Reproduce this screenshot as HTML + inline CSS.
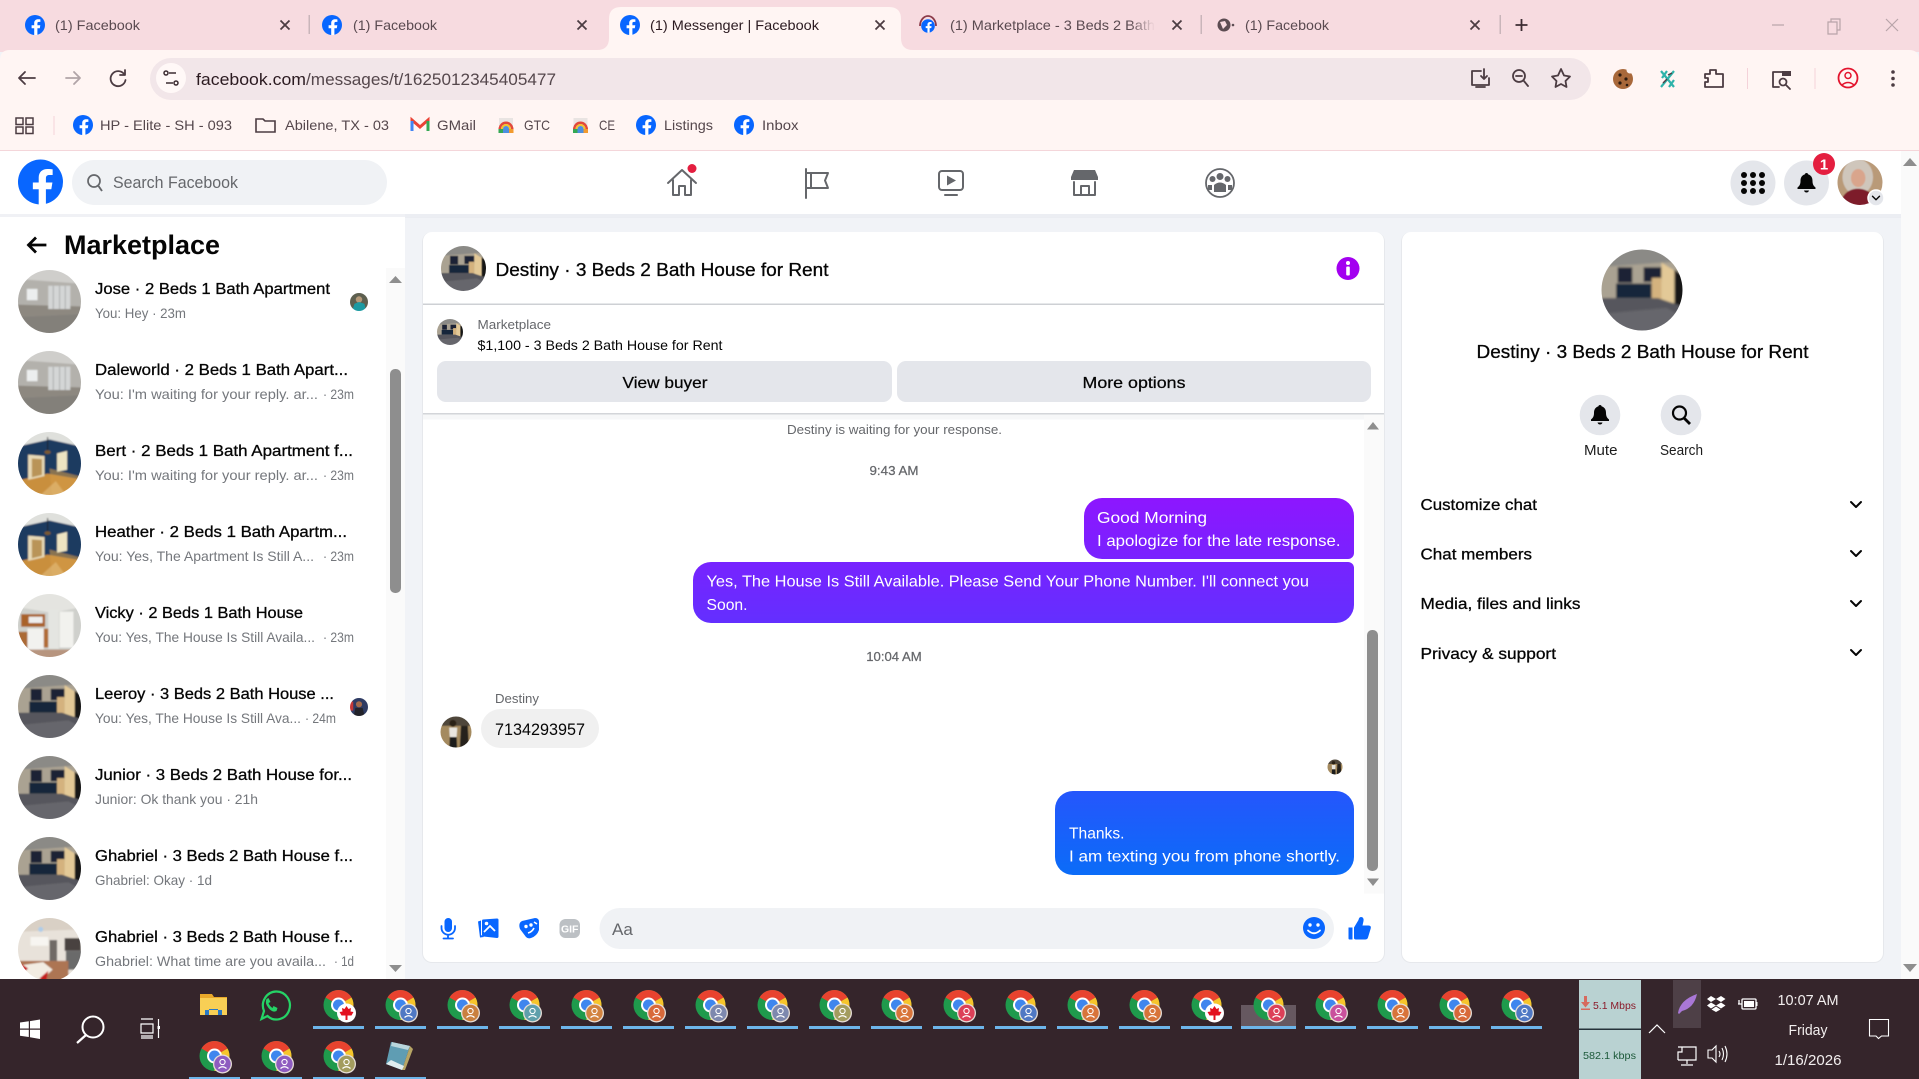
<!DOCTYPE html>
<html lang="en"><head><meta charset="utf-8"><title>(1) Messenger | Facebook</title>
<style>
html,body{margin:0;padding:0;width:1919px;height:1079px;overflow:hidden;background:#f1f3f7}
svg{display:block}
text{font-family:"Liberation Sans",sans-serif;white-space:pre}
.t{font-size:14px;fill:#5a4a50}
.b{font-size:14px;fill:#55474c}
.n{font-size:16px;fill:#050505;stroke:#050505;stroke-width:.3}
.s{font-size:14px;fill:#74777c}
.m{font-size:16px;fill:#fff}
.g{font-size:13px;fill:#65676b}
.ln{fill:none;stroke:#65676b;stroke-width:2;stroke-linejoin:round;stroke-linecap:round}
.tb{fill:none;stroke:#4c3c42;stroke-width:1.8;stroke-linecap:round;stroke-linejoin:round}
.w{fill:none;stroke:#fff;stroke-width:1.4}
.tk{font-size:15px;fill:#f2eeee}
</style></head><body>
<svg width="1919" height="1079" viewBox="0 0 1919 1079" xmlns="http://www.w3.org/2000/svg">
<defs>
<clipPath id="cc"><circle cx="50" cy="50" r="50"/></clipPath>
<filter id="bl" x="-5%" y="-5%" width="110%" height="110%"><feGaussianBlur stdDeviation="1.300"/></filter>
<linearGradient id="pg" gradientUnits="userSpaceOnUse" x1="0" y1="498" x2="0" y2="623"><stop offset="0" stop-color="#8d16ff"/><stop offset="1" stop-color="#632fff"/></linearGradient>
<linearGradient id="bg" gradientUnits="userSpaceOnUse" x1="0" y1="791" x2="0" y2="875"><stop offset="0" stop-color="#2556fc"/><stop offset="1" stop-color="#0b6cf8"/></linearGradient>
<linearGradient id="fade" x1="0" x2="1" y1="0" y2="0"><stop offset="0" stop-color="#f7dbe0" stop-opacity="0"/><stop offset="1" stop-color="#f7dbe0"/></linearGradient>
<g id="fb"><circle r="10" fill="#0866ff"/><path fill="#fff" d="M2.4 10V3.2H4.8L5.3.2H2.4V-1.6C2.4-2.5 2.8-3.1 4-3.1H5.4V-5.6C5-5.7 4.1-5.8 3.1-5.8 .9-5.8-.8-4.5-.8-2V.2H-3.4V3.2H-.8V10Z"/></g>
<g id="x"><path d="M-4.5-4.5L4.5 4.5M4.5-4.5L-4.5 4.5" stroke="#4c3c42" stroke-width="1.8" fill="none"/></g>
<g id="bell"><path d="M0-10C-1-10-1.5-9.4-1.5-8.7-5-7.5-6-5-6-2-6 1-7 3-9 4.5V6H9V4.5C7 3 6 1 6-2 6-5 5-7.5 1.5-8.7 1.5-9.4 1-10 0-10ZM-2.5 7.5H2.5C2 9 1 9.5 0 9.5-1 9.5-2 9-2.5 7.5Z" fill="#050505"/></g>
<g id="chv"><path d="M-5-2.5L0 2.5 5-2.5" fill="none" stroke="#050505" stroke-width="2" stroke-linecap="round" stroke-linejoin="round"/></g>
<g id="rb"><rect x="-7" y="-8" width="14" height="9" fill="#e9e4e2"/><path d="M-7.5 3A7.5 7.5 0 0 1 7.5 3H5A5 5 0 0 0-5 3Z" fill="#e2483b"/><path d="M-5 3A5 5 0 0 1 5 3H3A3 3 0 0 0-3 3Z" fill="#f3c22e"/><path d="M-3 3A3 3 0 0 1 3 3V7H-3Z" fill="#4c8fe0"/><path d="M-7.500 3H-3V7H-7.500Z" fill="#34a853"/><path d="M3 3H7.500V7H3Z" fill="#f29a2e"/></g>

<g id="r1" clip-path="url(#cc)"><g filter="url(#bl)"><rect x="-5" y="-5" width="110" height="110" fill="#b3b1ac"/><path d="M-5-5H105V22L-5 14Z" fill="#cfcecb"/><path d="M-5 55L105 58V105H-5Z" fill="#8d8880"/><rect x="14" y="30" width="17" height="18" fill="#eceeee"/><rect x="48" y="25" width="35" height="37" fill="#d4d6d6"/><path d="M56 25V62M66 25V62M75 25V62" stroke="#a8aaaa" stroke-width="1.5"/><path d="M-5 75L105 70V105H-5Z" fill="#83807a"/></g></g>
<g id="r2" clip-path="url(#cc)"><g filter="url(#bl)"><rect x="-5" y="-5" width="110" height="110" fill="#1b3a60"/><path d="M-5-5H105V24L50 12-5 24Z" fill="#dfe0dc"/><path d="M-5 78L47 66 105 76V105H-5Z" fill="#c98f3e"/><path d="M50 58L105 72V105H55Z" fill="#d39a48" opacity=".6"/><path d="M16 36L42 38V70L16 76Z" fill="#e7d9b6"/><path d="M22 42L38 43V68L22 72Z" fill="#b99458"/><path d="M62 34L78 30V60L62 63Z" fill="#eee4c2"/><path d="M47 8V30" stroke="#222" stroke-width="1.5"/><ellipse cx="47" cy="32" rx="5" ry="3" fill="#7a5a30"/><path d="M30 105L60 78 80 105Z" fill="#e7c687" opacity=".5"/></g></g>
<g id="r3" clip-path="url(#cc)"><g filter="url(#bl)"><rect x="-5" y="-5" width="110" height="110" fill="#cfd0cc"/><path d="M-5-5H105V20L55 30-5 20Z" fill="#e4e4e0"/><rect x="5" y="32" width="38" height="20" fill="#a9622c"/><rect x="17" y="36" width="22" height="10" fill="#eee"/><rect x="15" y="55" width="26" height="33" fill="#f2f2ef"/><rect x="-5" y="60" width="20" height="28" fill="#ab6a36"/><rect x="41" y="55" width="16" height="30" fill="#b06c36"/><rect x="48" y="25" width="17" height="62" fill="#e4e5e1"/><rect x="66" y="28" width="22" height="57" fill="#f2f2ee"/><path d="M-5 88H105V105H-5Z" fill="#b7957f"/></g></g>
<g id="r4" clip-path="url(#cc)"><g filter="url(#bl)"><rect x="-5" y="-5" width="110" height="110" fill="#aaa292"/><path d="M-5-5H105V14L-5 22Z" fill="#8b8a86"/><rect x="20" y="22" width="18" height="19" fill="#1b2434"/><rect x="52" y="22" width="22" height="18" fill="#1b2434"/><rect x="18" y="42" width="44" height="18" fill="#18253a"/><rect x="62" y="35" width="12" height="28" fill="#d4b27e"/><path d="M74 16L93 28V67L74 63Z" fill="#e3c997"/><path d="M90 25L105 35V72L90 67Z" fill="#151412"/><path d="M-5 60L70 60 105 72V105H-5Z" fill="#57575d"/><path d="M-5 80L80 72 105 85V105H-5Z" fill="#66666c"/></g></g>
<g id="r5" clip-path="url(#cc)"><g filter="url(#bl)"><rect x="-5" y="-5" width="110" height="110" fill="#e8e2da"/><path d="M-5-5H105V18L-5 22Z" fill="#d9d0c5"/><circle cx="36" cy="18" r="4" fill="#aecce8"/><rect x="20" y="30" width="28" height="14" fill="#f7f5f1"/><rect x="50" y="35" width="12" height="36" fill="#6f6a66"/><rect x="74" y="32" width="26" height="20" fill="#4a4340"/><rect x="76" y="52" width="26" height="30" fill="#6a6a6a"/><path d="M-5 68H80V105H-5Z" fill="#ad7453"/><path d="M5 75L40 70 55 82 30 105H20L8 88Z" fill="#f2ece2"/><path d="M4 72L16 80 8 88ZM34 96L48 84 44 105Z" fill="#c41f1f"/></g></g>
<g id="pw" clip-path="url(#cc)"><g filter="url(#bl)"><rect x="-5" y="-5" width="110" height="110" fill="#b99a78"/><ellipse cx="45" cy="38" rx="34" ry="40" fill="#cfc6bb"/><ellipse cx="46" cy="40" rx="16" ry="20" fill="#d9a58c"/><path d="M5 105C8 72 30 64 45 64 62 64 84 72 86 105Z" fill="#7d1d2a"/></g></g>
<g id="pd" clip-path="url(#cc)"><g filter="url(#bl)"><rect x="-5" y="-5" width="110" height="110" fill="#a48a5e"/><rect x="-5" y="-5" width="110" height="35" fill="#50463a"/><circle cx="40" cy="22" r="11" fill="#2a2018"/><path d="M28 36H54L52 66H30Z" fill="#e9e6e0"/><path d="M30 66H52L54 105H28Z" fill="#1a1a1c"/><path d="M66 30H88L92 105H62Z" fill="#25221f"/></g></g>
<g id="pt" clip-path="url(#cc)"><g filter="url(#bl)"><rect x="-5" y="-5" width="110" height="110" fill="#5d5e4f"/><circle cx="50" cy="36" r="18" fill="#b49a7a"/><path d="M10 105L25 60 50 50 80 60 90 105Z" fill="#1b9aa2"/></g></g>
<g id="pl" clip-path="url(#cc)"><g filter="url(#bl)"><rect x="-5" y="-5" width="110" height="110" fill="#2e3b63"/><circle cx="50" cy="35" r="17" fill="#a36b4b"/><path d="M20 105L30 55H70L82 105Z" fill="#23242c"/><rect x="-5" y="20" width="23" height="50" fill="#c43838"/></g></g>

<g id="ch"><circle r="15" fill="#1f9a4c"/><path d="M0 0L-13-7.5A15 15 0 0 1 13-7.5Z" fill="#e8432f"/><path d="M0 0L13-7.5A15 15 0 0 1 0 15Z" fill="#f7c52b"/><circle r="7.5" fill="#fff"/><circle r="5.5" fill="#3f86ee"/><circle cx="8" cy="8" r="9.5" fill="#e6ddd6"/><circle cx="8" cy="8" r="8.2"/><circle cx="8" cy="6" r="2.6" fill="none" stroke="#fff" stroke-width="1.1"/><path d="M4 12.5Q8 9 12 12.5" fill="none" stroke="#fff" stroke-width="1.2"/></g>
<g id="chr"><circle r="15" fill="#1f9a4c"/><path d="M0 0L-13-7.5A15 15 0 0 1 13-7.5Z" fill="#e8432f"/><path d="M0 0L13-7.5A15 15 0 0 1 0 15Z" fill="#f7c52b"/><circle r="7.5" fill="#fff"/><circle r="5.5" fill="#3f86ee"/><circle cx="8" cy="8" r="9.5" fill="#fff"/><path d="M8 1L10 4 12.5 3 12 6.5 15 7 13 10.5H9V15H7V10.5H3L1 7 4 6.5 3.5 3 6 4Z" fill="#e3101e"/></g>
</defs>

<!-- page background -->
<rect width="1919" height="1079" fill="#f1f3f7"/>

<!-- tab strip -->
<rect width="1919" height="52" fill="#f7dbe0"/>
<path d="M0 60Q0 50 10 50H1909Q1919 50 1919 60V151H0Z" fill="#fff5f3"/>
<path d="M597 50Q609 50 609 38V19Q609 7 621 7H889Q901 7 901 19V38Q901 50 913 50Z" fill="#fff5f3"/>

<use href="#fb" x="35" y="25"/>
<text class="t" x="55" y="30" textLength="85" lengthAdjust="spacingAndGlyphs">(1) Facebook</text>
<use href="#x" x="285" y="25"/>
<rect x="308.500" y="15" width="1.500" height="19" fill="#c9b5ba"/>
<use href="#fb" x="332" y="25"/>
<text class="t" x="353" y="30" textLength="84" lengthAdjust="spacingAndGlyphs">(1) Facebook</text>
<use href="#x" x="582" y="25"/>
<use href="#fb" x="630" y="25"/>
<text class="t" x="650" y="30" textLength="169" lengthAdjust="spacingAndGlyphs" style="fill:#2b1a20">(1) Messenger | Facebook</text>
<use href="#x" x="880" y="25"/>
<g transform="translate(928 26) scale(.68)"><use href="#fb"/></g>
<path d="M920 26A8 10 0 0 1 936 26" fill="none" stroke="#8b3a4a" stroke-width="1.800"/>
<text class="t" x="950" y="30" textLength="205" lengthAdjust="spacingAndGlyphs">(1) Marketplace - 3 Beds 2 Bath</text>
<rect x="1130" y="14" width="25" height="22" fill="url(#fade)"/>
<use href="#x" x="1177" y="25"/>
<rect x="1200.500" y="15" width="1.500" height="19" fill="#c9b5ba"/>
<circle cx="1224" cy="25" r="6.500" fill="#5c4c52"/><path d="M1220 22L1225 21 1227 25 1223 29Z" fill="#f7dbe0"/><circle cx="1233" cy="25" r="1.300" fill="#5c4c52"/>
<text class="t" x="1245" y="30" textLength="84" lengthAdjust="spacingAndGlyphs">(1) Facebook</text>
<use href="#x" x="1475" y="25"/>
<rect x="1499.500" y="15" width="1.500" height="19" fill="#c9b5ba"/>
<path d="M1521.500 19V31M1515.500 25H1527.500" stroke="#3c2c32" stroke-width="1.800"/>
<path d="M1772 25H1784" stroke="#b8a4a9" stroke-width="1.200"/>
<path d="M1828 22H1837V34H1828ZM1831 22V19H1840V30H1837" fill="none" stroke="#b8a4a9" stroke-width="1.200"/>
<path d="M1886 19L1898 31M1898 19L1886 31" stroke="#b8a4a9" stroke-width="1.200"/>

<!-- toolbar -->
<path d="M35 78H19M25 72L19 78 25 84" class="tb"/>
<path d="M66 78H80M74 72L80 78 74 84" fill="none" stroke="#b1a4a7" stroke-width="1.800" stroke-linecap="round" stroke-linejoin="round"/>
<path d="M124 74A7.500 7.500 0 1 0 125.500 80M125 70V75H120" class="tb"/>
<rect x="150" y="58" width="1441" height="42" rx="21" fill="#f2e6e9"/>
<circle cx="171" cy="78" r="15" fill="#fff8f7"/>
<path d="M169 73H176M166 83H173" stroke="#3c2c32" stroke-width="1.600"/><circle cx="166" cy="73" r="2" fill="none" stroke="#3c2c32" stroke-width="1.500"/><circle cx="176" cy="83" r="2" fill="none" stroke="#3c2c32" stroke-width="1.500"/>
<text x="196" y="85" font-size="17" fill="#2b1a20" textLength="110" lengthAdjust="spacingAndGlyphs">facebook.com</text>
<text x="306" y="85" font-size="17" fill="#55474c" textLength="250" lengthAdjust="spacingAndGlyphs">/messages/t/1625012345405477</text>
<path d="M1481 71H1472V85H1489V78M1484 69V79M1481 76L1484 79 1487 76M1476 87H1485" class="tb"/>
<circle cx="1519" cy="76" r="6" class="tb"/><path d="M1523.500 80.500L1528 86M1516 76H1522" class="tb"/>
<path d="M1561 69L1564 75.500 1570 76.500 1565.500 81 1566.500 87 1561 84 1555.500 87 1556.500 81 1552 76.500 1558 75.500Z" class="tb" stroke-width="1.500"/>
<circle cx="1623" cy="79" r="10" fill="#a8683a"/><circle cx="1620" cy="75" r="1.600" fill="#2b1a10"/><circle cx="1626" cy="79" r="1.600" fill="#2b1a10"/><circle cx="1620" cy="83" r="1.600" fill="#2b1a10"/><circle cx="1627" cy="85" r="1.300" fill="#2b1a10"/><circle cx="1630" cy="70" r="3.500" fill="#fff5f3"/>
<g transform="translate(-1 0)"><path d="M1662 71L1675 87M1675 71L1662 87M1663 78L1668 71M1670 87L1675 80" stroke="#2fb3aa" stroke-width="2.200" fill="none"/><path d="M1664 83L1668 79M1669 75L1673 73" stroke="#4c3c42" stroke-width="1.400"/></g>
<path d="M1705 74H1710V70H1716V74H1723V87H1705V82H1708V78H1705Z" class="tb"/>
<rect x="1747" y="68" width="1" height="21" fill="#f4d2d9"/>
<g transform="translate(-1 0)"><path d="M1791 72H1774V87H1780" class="tb"/><rect x="1783" y="71" width="9" height="5" fill="#4c3c42"/><circle cx="1784" cy="82" r="3.500" class="tb"/><path d="M1787 85L1791 89" class="tb"/></g>
<rect x="1814.500" y="68" width="1" height="21" fill="#f4d2d9"/>
<circle cx="1848" cy="78" r="9.500" fill="none" stroke="#e3142d" stroke-width="1.800"/><circle cx="1848" cy="75.500" r="3" fill="none" stroke="#e3142d" stroke-width="1.500"/><path d="M1842 85Q1848 80 1854 85" fill="none" stroke="#e3142d" stroke-width="1.500"/>
<circle cx="1893" cy="72" r="1.800" fill="#4c3c42"/><circle cx="1893" cy="78.500" r="1.800" fill="#4c3c42"/><circle cx="1893" cy="85" r="1.800" fill="#4c3c42"/>

<!-- bookmarks -->
<path d="M16 118H23V124.500H16ZM26 118H33V124.500H26ZM16 127H23V133.500H16ZM26 127H33V133.500H26Z" fill="none" stroke="#4c3c42" stroke-width="1.500"/>
<rect x="53.500" y="116" width="1" height="19" fill="#f4d2d9"/>
<use href="#fb" x="83" y="125"/>
<text class="b" x="100" y="130" textLength="132" lengthAdjust="spacingAndGlyphs">HP - Elite - SH - 093</text>
<path d="M256 119H263L265 121H275V132H256Z" fill="none" stroke="#4c3c42" stroke-width="1.600"/>
<text class="b" x="285" y="130" textLength="104" lengthAdjust="spacingAndGlyphs">Abilene, TX - 03</text>
<path d="M412 131V120L420 127 428 120V131" fill="none" stroke="#ea4335" stroke-width="3"/><path d="M412 121V131" stroke="#4285f4" stroke-width="3"/><path d="M428 121V131" stroke="#34a853" stroke-width="3"/>
<text class="b" x="437" y="130" textLength="39" lengthAdjust="spacingAndGlyphs">GMail</text>
<use href="#rb" x="506" y="126"/>
<text class="b" x="524" y="130" textLength="26" lengthAdjust="spacingAndGlyphs">GTC</text>
<use href="#rb" x="580.500" y="126"/>
<text class="b" x="599" y="130" textLength="16" lengthAdjust="spacingAndGlyphs">CE</text>
<use href="#fb" x="646" y="125"/>
<text class="b" x="664" y="130" textLength="49" lengthAdjust="spacingAndGlyphs">Listings</text>
<use href="#fb" x="744" y="125"/>
<text class="b" x="762" y="130" textLength="36.500" lengthAdjust="spacingAndGlyphs">Inbox</text>

<!-- FB header -->
<rect y="150" width="1919" height="1" fill="#f4d6da"/>
<rect y="206" width="1901" height="12" fill="#e4e6ea" opacity=".45"/>
<rect y="151" width="1901" height="63" fill="#fff"/>
<g transform="translate(40.500 182) scale(2.25)"><use href="#fb"/></g>
<rect x="72" y="160" width="315" height="45" rx="22.500" fill="#f0f2f5"/>
<circle cx="94" cy="181" r="6" fill="none" stroke="#65676b" stroke-width="1.700"/><path d="M98.500 186L102 191" stroke="#65676b" stroke-width="1.900"/>
<text x="113" y="188" font-size="17" fill="#65676b" textLength="125" lengthAdjust="spacingAndGlyphs">Search Facebook</text>
<path class="ln" d="M668 183L682 170 696 183M673 180V195H679V186H685V195H691V180"/>
<circle cx="692" cy="168.500" r="4.500" fill="#e41e3f"/>
<path class="ln" d="M806 169V198M806 173H828L825 180.500 828 188H806M811 173V188" stroke-width="1.700"/>
<rect x="939" y="171" width="24" height="19" rx="3" class="ln"/><path d="M947 175.500L956 180.500 947 185.500Z" fill="#65676b"/><path class="ln" d="M945 195H957"/>
<path d="M1071 177L1074 170H1095L1098 177V180H1071Z" fill="#65676b"/><path class="ln" d="M1074 182V195H1095V182M1081 195V186H1089V195"/>
<circle cx="1220" cy="183" r="14" fill="none" stroke="#65676b" stroke-width="1.800"/><circle cx="1220" cy="176.500" r="3.500" fill="#65676b"/><circle cx="1212.500" cy="179" r="3" fill="#65676b"/><circle cx="1227.500" cy="179" r="3" fill="#65676b"/><path d="M1214 192V185Q1220 180 1226 185V192Z" fill="#65676b"/><path d="M1208 190V185H1212V190ZM1228 190V185H1232V190Z" fill="#65676b"/>

<circle cx="1753" cy="183" r="22.500" fill="#e4e6eb"/>
<g fill="#050505"><circle cx="1744" cy="175" r="3"/><circle cx="1753" cy="175" r="3"/><circle cx="1762" cy="175" r="3"/><circle cx="1744" cy="183" r="3"/><circle cx="1753" cy="183" r="3"/><circle cx="1762" cy="183" r="3"/><circle cx="1744" cy="191" r="3"/><circle cx="1753" cy="191" r="3"/><circle cx="1762" cy="191" r="3"/></g>
<circle cx="1806.500" cy="183" r="22.500" fill="#e4e6eb"/><use href="#bell" x="1806.500" y="183"/>
<circle cx="1824" cy="164" r="11" fill="#e41e3f"/><text x="1824" y="169.500" font-size="15" font-weight="bold" fill="#fff" text-anchor="middle">1</text>
<use href="#pw" transform="translate(1837.500 160) scale(.45)"/>
<circle cx="1876" cy="198" r="8" fill="#e4e6eb" stroke="#fff" stroke-width="1.500"/><g transform="translate(1876 198) scale(.7)"><use href="#chv"/></g>

<!-- page scrollbar -->
<rect x="1901" y="151" width="18" height="828" fill="#fafafa"/>
<path d="M1910 158L1917 166H1903Z" fill="#8e8e8e"/>
<path d="M1910 972L1917 964H1903Z" fill="#8e8e8e"/>

<!-- left sidebar -->
<rect y="214" width="405" height="765" fill="#fff"/>
<rect y="214" width="1901" height="3" fill="#eceef2" opacity=".8"/>
<path d="M45 245H29M35 238.500L28.500 245 35 251.500" fill="none" stroke="#050505" stroke-width="2.800" stroke-linecap="square"/>
<text x="64" y="254" font-size="27" font-weight="bold" fill="#050505" textLength="156" lengthAdjust="spacingAndGlyphs">Marketplace</text>
<rect x="386" y="268" width="19" height="711" fill="#fafafa"/>
<path d="M395.500 276L402 283H389Z" fill="#8e8e8e"/>
<rect x="390" y="369" width="11" height="224" rx="5" fill="#8e8e8e"/>
<path d="M395.500 972L402 965H389Z" fill="#8e8e8e"/>

<use href="#r1" transform="translate(18 270) scale(.63)"/>
<text class="n" x="95" y="294" textLength="235" lengthAdjust="spacingAndGlyphs">Jose · 2 Beds 1 Bath Apartment</text>
<text class="s" x="95" y="318" textLength="91" lengthAdjust="spacingAndGlyphs">You: Hey · 23m</text>
<use href="#pt" transform="translate(350 293) scale(.18)"/>

<use href="#r1" transform="translate(18 351) scale(.63)"/>
<text class="n" x="95" y="375" textLength="253" lengthAdjust="spacingAndGlyphs">Daleworld · 2 Beds 1 Bath Apart...</text>
<text class="s" x="95" y="399" textLength="223" lengthAdjust="spacingAndGlyphs">You: I'm waiting for your reply. ar...</text>
<text class="s" x="323" y="399" textLength="31" lengthAdjust="spacingAndGlyphs">· 23m</text>

<use href="#r2" transform="translate(18 432) scale(.63)"/>
<text class="n" x="95" y="456" textLength="258" lengthAdjust="spacingAndGlyphs">Bert · 2 Beds 1 Bath Apartment f...</text>
<text class="s" x="95" y="480" textLength="223" lengthAdjust="spacingAndGlyphs">You: I'm waiting for your reply. ar...</text>
<text class="s" x="323" y="480" textLength="31" lengthAdjust="spacingAndGlyphs">· 23m</text>

<use href="#r2" transform="translate(18 513) scale(.63)"/>
<text class="n" x="95" y="537" textLength="252" lengthAdjust="spacingAndGlyphs">Heather · 2 Beds 1 Bath Apartm...</text>
<text class="s" x="95" y="561" textLength="219" lengthAdjust="spacingAndGlyphs">You: Yes, The Apartment Is Still A...</text>
<text class="s" x="323" y="561" textLength="31" lengthAdjust="spacingAndGlyphs">· 23m</text>

<use href="#r3" transform="translate(18 594) scale(.63)"/>
<text class="n" x="95" y="618" textLength="208" lengthAdjust="spacingAndGlyphs">Vicky · 2 Beds 1 Bath House</text>
<text class="s" x="95" y="642" textLength="220" lengthAdjust="spacingAndGlyphs">You: Yes, The House Is Still Availa...</text>
<text class="s" x="323" y="642" textLength="31" lengthAdjust="spacingAndGlyphs">· 23m</text>

<use href="#r4" transform="translate(18 675) scale(.63)"/>
<text class="n" x="95" y="699" textLength="239" lengthAdjust="spacingAndGlyphs">Leeroy · 3 Beds 2 Bath House ...</text>
<text class="s" x="95" y="723" textLength="206" lengthAdjust="spacingAndGlyphs">You: Yes, The House Is Still Ava...</text>
<text class="s" x="305" y="723" textLength="31" lengthAdjust="spacingAndGlyphs">· 24m</text>
<use href="#pl" transform="translate(350 698) scale(.18)"/>

<use href="#r4" transform="translate(18 756) scale(.63)"/>
<text class="n" x="95" y="780" textLength="257" lengthAdjust="spacingAndGlyphs">Junior · 3 Beds 2 Bath House for...</text>
<text class="s" x="95" y="804" textLength="163" lengthAdjust="spacingAndGlyphs">Junior: Ok thank you · 21h</text>

<use href="#r4" transform="translate(18 837) scale(.63)"/>
<text class="n" x="95" y="861" textLength="258" lengthAdjust="spacingAndGlyphs">Ghabriel · 3 Beds 2 Bath House f...</text>
<text class="s" x="95" y="885" textLength="117" lengthAdjust="spacingAndGlyphs">Ghabriel: Okay · 1d</text>

<use href="#r5" transform="translate(18 918) scale(.63)"/>
<text class="n" x="95" y="942" textLength="258" lengthAdjust="spacingAndGlyphs">Ghabriel · 3 Beds 2 Bath House f...</text>
<text class="s" x="95" y="966" textLength="231" lengthAdjust="spacingAndGlyphs">Ghabriel: What time are you availa...</text>
<text class="s" x="334" y="966" textLength="20" lengthAdjust="spacingAndGlyphs">· 1d</text>

<!-- chat panel -->
<rect x="422" y="232" width="963" height="731" rx="10" fill="#e6e8ec"/>
<rect x="423" y="232" width="961" height="730" rx="9" fill="#fff"/>
<use href="#r4" transform="translate(441 246) scale(.45)"/>
<text x="495.500" y="276" font-size="18" fill="#050505" stroke="#050505" stroke-width=".3" textLength="333" lengthAdjust="spacingAndGlyphs">Destiny · 3 Beds 2 Bath House for Rent</text>
<circle cx="1348" cy="268.500" r="11.500" fill="#a300f0"/><circle cx="1348" cy="263" r="2" fill="#fff"/><rect x="1346.200" y="266.500" width="3.600" height="9" rx="1" fill="#fff"/>
<rect x="423" y="303.500" width="961" height="1.500" fill="#ced0d4"/>
<use href="#r4" transform="translate(437 319) scale(.26)"/>
<text x="477.500" y="329" font-size="13" fill="#65676b" textLength="73.500" lengthAdjust="spacingAndGlyphs">Marketplace</text>
<text x="477.500" y="350" font-size="14" fill="#050505" textLength="245" lengthAdjust="spacingAndGlyphs">$1,100 - 3 Beds 2 Bath House for Rent</text>
<rect x="437" y="361" width="455" height="41" rx="9" fill="#e4e6eb"/>
<rect x="897" y="361" width="474" height="41" rx="9" fill="#e4e6eb"/>
<text x="665" y="388" font-size="16" fill="#050505" stroke="#050505" stroke-width=".25" text-anchor="middle" textLength="85" lengthAdjust="spacingAndGlyphs">View buyer</text>
<text x="1134" y="388" font-size="16" fill="#050505" stroke="#050505" stroke-width=".25" text-anchor="middle" textLength="103" lengthAdjust="spacingAndGlyphs">More options</text>
<rect x="423" y="413" width="961" height="1.500" fill="#d3d5d9"/>
<rect x="423" y="414.500" width="961" height="5" fill="#f6f7f8"/>
<rect x="1364" y="414.500" width="20" height="479" fill="#fafafa"/>
<path d="M1373 422L1379 429.500H1367Z" fill="#8e8e8e"/>
<rect x="1367" y="630" width="11" height="241" rx="5" fill="#8e8e8e"/>
<path d="M1373 886L1379 878.500H1367Z" fill="#8e8e8e"/>
<text x="894.500" y="434" font-size="13" fill="#65676b" text-anchor="middle" textLength="215" lengthAdjust="spacingAndGlyphs">Destiny is waiting for your response.</text>
<text x="894" y="475" font-size="13" fill="#65676b" stroke="#65676b" stroke-width=".25" text-anchor="middle" textLength="49" lengthAdjust="spacingAndGlyphs">9:43 AM</text>
<path d="M1102 498H1336A18 18 0 0 1 1354 516V553A6 6 0 0 1 1348 559H1102A18 18 0 0 1 1084 541V516A18 18 0 0 1 1102 498Z" fill="url(#pg)"/>
<path d="M711 562H1348A6 6 0 0 1 1354 568V605A18 18 0 0 1 1336 623H711A18 18 0 0 1 693 605V580A18 18 0 0 1 711 562Z" fill="url(#pg)"/>
<text class="m" x="1097" y="523" textLength="110" lengthAdjust="spacingAndGlyphs">Good Morning</text>
<text class="m" x="1097" y="546" textLength="243.500" lengthAdjust="spacingAndGlyphs">I apologize for the late response.</text>
<text class="m" x="706.500" y="586.500" textLength="602.500" lengthAdjust="spacingAndGlyphs">Yes, The House Is Still Available. Please Send Your Phone Number. I'll connect you</text>
<text class="m" x="706.500" y="610" textLength="41" lengthAdjust="spacingAndGlyphs">Soon.</text>
<text x="894" y="661" font-size="13" fill="#65676b" stroke="#65676b" stroke-width=".25" text-anchor="middle" textLength="55.500" lengthAdjust="spacingAndGlyphs">10:04 AM</text>
<text x="495" y="703" font-size="13" fill="#65676b" textLength="44" lengthAdjust="spacingAndGlyphs">Destiny</text>
<use href="#pd" transform="translate(440.500 716.500) scale(.31)"/>
<rect x="481" y="709" width="118" height="39" rx="19.500" fill="#f0f0f0"/>
<text x="495" y="735" font-size="17" fill="#050505" textLength="90" lengthAdjust="spacingAndGlyphs">7134293957</text>
<use href="#pd" transform="translate(1327.500 759.500) scale(.15)"/>
<rect x="1055" y="791" width="299" height="84" rx="18" fill="url(#bg)"/>
<text class="m" x="1069" y="838.500" textLength="55.500" lengthAdjust="spacingAndGlyphs">Thanks.</text>
<text class="m" x="1069" y="861.500" textLength="271" lengthAdjust="spacingAndGlyphs">I am texting you from phone shortly.</text>

<!-- composer -->
<rect x="444.500" y="918" width="7.500" height="14" rx="3.700" fill="#0866ff"/><path d="M441.500 926V928A6.700 6.700 0 0 0 455 928V926M448 935V938M443.500 938.500H453" fill="none" stroke="#0866ff" stroke-width="1.800" stroke-linecap="round"/>
<path d="M478 921.500L481 920.500 481 935 484 937 480 937.500Z" fill="#0866ff"/><path d="M483 919.500L497 918.500Q498.500 918.500 498.500 920V936.500Q498.500 938 497 938L483.500 936.500Q482 936.500 482 935V921Q482 919.500 483 919.500Z" fill="#0866ff"/><circle cx="486.500" cy="923.500" r="1.800" fill="#fff"/><path d="M484 932L490 926 495 931" fill="none" stroke="#fff" stroke-width="1.800"/>
<path d="M522 921L535 918Q539 918 539 922V930Q537 936 531 938Q528 939 526 937L520 929Q518 923 522 921Z" fill="#0866ff"/><circle cx="526" cy="926.500" r="1.700" fill="#fff"/><circle cx="531" cy="925" r="1.700" fill="#fff"/><path d="M528 933Q532 932 534 928M534 922L537 924" fill="none" stroke="#fff" stroke-width="1.600"/>
<rect x="559.500" y="919" width="20.500" height="19" rx="6" fill="#bcc0c4"/><text x="569.700" y="932.500" font-size="10.500" font-weight="bold" fill="#fff" text-anchor="middle">GIF</text>
<rect x="599.500" y="908" width="734.500" height="41" rx="20.500" fill="#f0f2f5"/>
<text x="612" y="935" font-size="17" fill="#65676b">Aa</text>
<circle cx="1314" cy="928" r="11" fill="#0866ff"/><circle cx="1310" cy="925" r="1.700" fill="#fff"/><circle cx="1318" cy="925" r="1.700" fill="#fff"/><path d="M1308 930.500Q1314 936 1320 930.500" fill="none" stroke="#fff" stroke-width="1.800" stroke-linecap="round"/>
<path d="M1348.500 927.500H1352.500V939.500H1349.500Q1348.500 939.500 1348.500 938.500ZM1354 927.500L1358.500 920Q1359 917 1361 917 1364 917 1363.500 921L1362.500 925.500H1368.500Q1371.500 925.500 1370.700 928.500L1368 937.500Q1367.500 939.500 1365 939.500H1356Q1354 939.500 1354 938Z" fill="#0866ff"/>

<!-- right panel -->
<rect x="1401" y="232" width="483" height="731" rx="10" fill="#e6e8ec"/>
<rect x="1402" y="232" width="481" height="730" rx="9" fill="#fff"/>
<use href="#r4" transform="translate(1601.500 249.500) scale(.81)"/>
<text x="1476.500" y="358" font-size="18" fill="#050505" stroke="#050505" stroke-width=".3" textLength="332" lengthAdjust="spacingAndGlyphs">Destiny · 3 Beds 2 Bath House for Rent</text>
<circle cx="1600" cy="415" r="20.300" fill="#e4e6eb"/><use href="#bell" x="1600" y="415"/>
<circle cx="1681" cy="415" r="20.300" fill="#e4e6eb"/><circle cx="1679.500" cy="413" r="6.500" fill="none" stroke="#050505" stroke-width="2.200"/><path d="M1684 418L1690 424" stroke="#050505" stroke-width="2.800"/>
<text x="1584" y="455" font-size="15" fill="#1c1c1c" textLength="33.500" lengthAdjust="spacingAndGlyphs">Mute</text>
<text x="1660" y="455" font-size="15" fill="#1c1c1c" textLength="43" lengthAdjust="spacingAndGlyphs">Search</text>
<text class="n" x="1420.500" y="510" textLength="116.500" lengthAdjust="spacingAndGlyphs">Customize chat</text>
<text class="n" x="1420.500" y="559.500" textLength="111.500" lengthAdjust="spacingAndGlyphs">Chat members</text>
<text class="n" x="1420.500" y="609" textLength="160" lengthAdjust="spacingAndGlyphs">Media, files and links</text>
<text class="n" x="1420.500" y="659" textLength="135.500" lengthAdjust="spacingAndGlyphs">Privacy &amp; support</text>
<use href="#chv" x="1856" y="504.500"/><use href="#chv" x="1856" y="553.500"/><use href="#chv" x="1856" y="603.500"/><use href="#chv" x="1856" y="652.500"/>

<!-- taskbar -->
<rect y="979" width="1919" height="100" fill="#35252b"/>
<path d="M20 1022.500L28.800 1021.300V1028.500H20ZM30 1021.100L40 1019.500V1028.500H30ZM20 1029.700H28.800V1037L20 1035.800ZM30 1029.700H40V1039L30 1037.300Z" fill="#fff"/>
<circle cx="93" cy="1027" r="10.500" fill="none" stroke="#fff" stroke-width="2"/><path d="M86 1035L77 1043" stroke="#fff" stroke-width="2.200"/>
<path d="M141 1019H153M141 1038H153M141 1024H153V1033H141ZM158.500 1019V1026M158.500 1029V1038M141 1036H153" fill="none" stroke="#fff" stroke-width="1.200"/>
<rect x="157.500" y="1026" width="2.500" height="3" fill="#fff"/>
<path d="M200 994H212L214 997H227V1014H200Z" fill="#e8a82a"/><rect x="200" y="998" width="27" height="17" fill="#f8cf55"/><path d="M205 1010H222V1015H218V1009H209V1015H205Z" fill="#2a79c4"/>
<g transform="translate(-3.500 0)"><path d="M265 1019L267.500 1011A13.500 14 0 1 1 271 1016Z" fill="none" stroke="#25d366" stroke-width="2.200"/><path d="M270 999Q268 1003 272 1008 276 1013 280 1011L281 1008 277 1006 276 1008Q273 1006 272 1003L274 1002 272 998Z" fill="#25d366"/></g>

<rect x="1241" y="1005" width="55" height="24" fill="#665860"/>
<g fill="#6db5ea">
<rect x="313" y="1026" width="51" height="3"/><rect x="375" y="1026" width="51" height="3"/><rect x="437" y="1026" width="51" height="3"/><rect x="499" y="1026" width="51" height="3"/><rect x="561" y="1026" width="51" height="3"/><rect x="623" y="1026" width="51" height="3"/><rect x="685" y="1026" width="51" height="3"/><rect x="747" y="1026" width="51" height="3"/><rect x="809" y="1026" width="51" height="3"/><rect x="871" y="1026" width="51" height="3"/><rect x="933" y="1026" width="51" height="3"/><rect x="995" y="1026" width="51" height="3"/><rect x="1057" y="1026" width="51" height="3"/><rect x="1119" y="1026" width="51" height="3"/><rect x="1181" y="1026" width="51" height="3"/><rect x="1241" y="1026" width="55" height="3"/><rect x="1305" y="1026" width="51" height="3"/><rect x="1367" y="1026" width="51" height="3"/><rect x="1429" y="1026" width="51" height="3"/><rect x="1491" y="1026" width="51" height="3"/>
<rect x="189" y="1077" width="51" height="2"/><rect x="251" y="1077" width="51" height="2"/><rect x="313" y="1077" width="51" height="2"/><rect x="375" y="1077" width="51" height="2"/>
</g>
<use href="#chr" x="338.500" y="1005"/>
<use href="#ch" x="400.500" y="1005" fill="#4f78c4"/>
<use href="#ch" x="462.500" y="1005" fill="#c9803f"/>
<use href="#ch" x="524.500" y="1005" fill="#5f9fab"/>
<use href="#ch" x="586.500" y="1005" fill="#d2833f"/>
<use href="#ch" x="648.500" y="1005" fill="#d8693a"/>
<use href="#ch" x="710.500" y="1005" fill="#7d88ae"/>
<use href="#ch" x="772.500" y="1005" fill="#7d88ae"/>
<use href="#ch" x="834.500" y="1005" fill="#a39c5e"/>
<use href="#ch" x="896.500" y="1005" fill="#d8743a"/>
<use href="#ch" x="958.500" y="1005" fill="#dc4058"/>
<use href="#ch" x="1020.500" y="1005" fill="#4f78c4"/>
<use href="#ch" x="1082.500" y="1005" fill="#d8743a"/>
<use href="#ch" x="1144.500" y="1005" fill="#d8743a"/>
<use href="#chr" x="1206.500" y="1005"/>
<use href="#ch" x="1268.500" y="1005" fill="#dc4058"/>
<use href="#ch" x="1330.500" y="1005" fill="#c9509c"/>
<use href="#ch" x="1392.500" y="1005" fill="#d8743a"/>
<use href="#ch" x="1454.500" y="1005" fill="#d8693a"/>
<use href="#ch" x="1516.500" y="1005" fill="#4f78c4"/>
<use href="#ch" x="214.500" y="1056" fill="#8e5cc0"/>
<use href="#ch" x="276.500" y="1056" fill="#8e5cc0"/>
<use href="#ch" x="338.500" y="1056" fill="#a39c5e"/>
<path d="M391 1042L410 1046 402 1070 386 1064Z" fill="#5f9db3"/><path d="M392 1042L410 1046 408 1050 391 1046Z" fill="#b9d6dc"/><path d="M410 1046L413 1049 405 1070 402 1070Z" fill="#b7a565"/><path d="M386 1064L402 1070 404 1066 391 1060Z" fill="#e0edf0"/>

<!-- tray -->
<rect x="1579" y="980" width="62" height="99" fill="#b9d2d2"/>
<rect x="1579" y="1028.500" width="62" height="1.500" fill="#25323a"/>
<path d="M1581 1002H1584V996H1587V1002H1590L1585.500 1007.500ZM1581 1008.500H1590V1010H1581Z" fill="#d76a5e"/>
<text x="1593" y="1009" font-size="10.500" fill="#8b1a2a" textLength="43" lengthAdjust="spacingAndGlyphs">5.1 Mbps</text>
<text x="1583" y="1059" font-size="10.500" fill="#1d5a3a" textLength="53" lengthAdjust="spacingAndGlyphs">582.1 kbps</text>
<path d="M1649 1033L1657 1025 1665 1033" fill="none" stroke="#fff" stroke-width="1.200"/>
<rect x="1673" y="980" width="28" height="48" fill="#4e4047"/>
<path d="M1678 1013Q1680 1000 1697 994 1694 1008 1682 1011L1679 1014Z" fill="#a977d6"/>
<path d="M1711 996L1716 999 1711 1002 1707 999ZM1721 996L1725.500 999 1721 1002 1716 999ZM1711 1002.500L1716 1005.500 1711 1008.500 1707 1005.500ZM1721 1002.500L1725.500 1005.500 1721 1008.500 1716 1005.500ZM1711.500 1009.500L1716 1006.500 1720.500 1009.500 1716 1012Z" fill="#fff"/>
<rect x="1742" y="999" width="14" height="10" rx="1" fill="none" stroke="#fff" stroke-width="1.300"/><rect x="1744" y="1001" width="10" height="6" fill="#fff"/><rect x="1756" y="1002" width="1.500" height="4" fill="#fff"/><path d="M1738 1004H1742M1739 1000V1004" stroke="#fff" stroke-width="1.300" fill="none"/>
<path d="M1680 1047H1696V1060H1678M1687 1060V1064M1681 1065H1693M1678 1047H1682V1052H1678V1060" fill="none" stroke="#fff" stroke-width="1.200"/>
<path d="M1708 1050H1712L1716 1046V1062L1712 1058H1708Z" fill="none" stroke="#fff" stroke-width="1.100"/><path d="M1719 1051Q1721 1054 1719 1057M1722 1048Q1725 1054 1722 1060M1725 1046Q1729 1054 1725 1062" fill="none" stroke="#fff" stroke-width="1.100"/>
<text class="tk" x="1808" y="1005" text-anchor="middle" textLength="61" lengthAdjust="spacingAndGlyphs">10:07 AM</text>
<text class="tk" x="1808" y="1035" text-anchor="middle" textLength="39" lengthAdjust="spacingAndGlyphs">Friday</text>
<text class="tk" x="1808" y="1065" text-anchor="middle" textLength="67" lengthAdjust="spacingAndGlyphs">1/16/2026</text>
<path d="M1869.500 1019.500H1888.500V1036H1881.500L1878.500 1038.500 1876 1036H1869.500Z" fill="none" stroke="#fff" stroke-width="1.100"/>
</svg>
</body></html>
